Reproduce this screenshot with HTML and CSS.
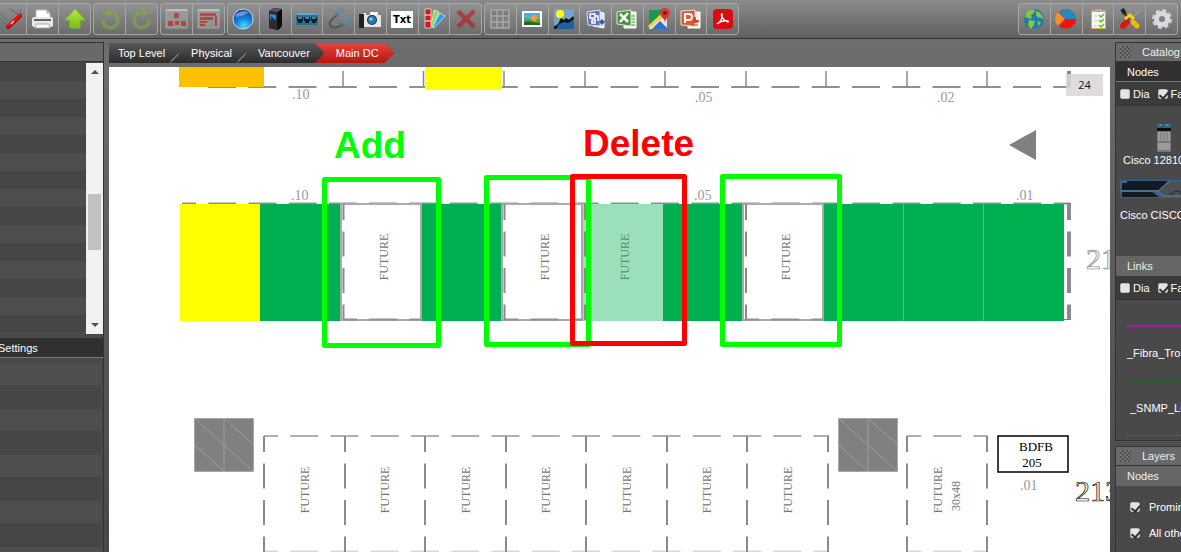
FILE: index.html
```html
<!DOCTYPE html>
<html lang="en">
<head>
    <meta charset="utf-8">
    <title>Main DC</title>
    <link rel="stylesheet" href="styles.css">
</head>
<body>
    <header class="toolbar">
        <div class="group group-3">
            <button type="button" aria-label="Tools"><svg viewBox="0 0 24 24"><path d="M1 6l8 7M1 11l8 9" stroke="#5b7382" stroke-width="1.5" stroke-dasharray="2 1"/><path d="M11 2l8 5M21 2l1 6-4-1" fill="none" stroke="#50687a" stroke-width="1.5" stroke-dasharray="2 1"/><path d="M9 20L21 9" stroke="#a00" stroke-width="4" stroke-linecap="round"/><path d="M9 19L21 8" stroke="#f01010" stroke-width="3" stroke-linecap="round"/><path d="M12 17l3-3" stroke="#fff" stroke-width="1.2"/></svg></button>
            <button type="button" aria-label="Print"><svg viewBox="0 0 24 24"><path d="M5 11V3h11l3 3v5z" fill="#fff" stroke="#bbb"/><path d="M16 3v3h3" fill="none" stroke="#999"/><rect x="1" y="10" width="21" height="10" rx="2" fill="#e8e8e8"/><path d="M3 12h17v2H3z" fill="#666"/><path d="M5 17h13l1 4H4z" fill="#fff" stroke="#aaa"/></svg></button>
            <button type="button" aria-label="Up one level"><svg viewBox="0 0 24 24"><path d="M12 2L22 13h-5v8H7v-8H2z" fill="url(#lime)" stroke="#7fc41c" stroke-linejoin="round"/></svg></button>
        </div>
        <div class="group group-2">
            <button type="button" aria-label="Undo"><svg viewBox="0 0 24 24" class="faded"><path d="M5 12A7.500 7.500 0 1 0 11 6" fill="none" stroke="#7ab03a" stroke-width="3.500"/><path d="M4 6l8-5v9z" fill="#7ab03a"/></svg></button>
            <button type="button" aria-label="Redo"><svg viewBox="0 0 24 24" class="faded"><path d="M13 6A7.500 7.500 0 1 0 19 12" fill="none" stroke="#7ab03a" stroke-width="3.500"/><path d="M12 1l8 5-8 4z" fill="#7ab03a"/></svg></button>
        </div>
        <div class="group group-2">
            <button type="button" aria-label="Diagram view"><svg viewBox="0 0 24 24" class="faded"><rect x="1" y="3" width="21" height="18" fill="#a5a5a5" stroke="#c0c0c0"/><path d="M1 3h21" stroke="#ddd" stroke-width="2"/><path d="M9 6h5v5H9zM3 14h5v5H3zM10 14h4v4h-4zM16 14h5v5h-5z" fill="#d8241c"/></svg></button>
            <button type="button" aria-label="Chart view"><svg viewBox="0 0 24 24" class="faded"><rect x="1" y="3" width="21" height="18" fill="#a5a5a5" stroke="#c0c0c0"/><path d="M1 3h21" stroke="#ddd" stroke-width="2"/><path d="M3 6h16v3H3zM3 10h13v3H3zM3 14h7v2H3zM3 17h5v2H3zM18 9h2v10h-2z" fill="#d8241c"/></svg></button>
        </div>
        <div class="group group-8">
            <button type="button" aria-label="Location"><svg viewBox="0 0 24 24"><circle cx="12" cy="12" r="10" fill="url(#sea)" stroke="#c9d8ef"/><path d="M4 9a9 8 0 0 1 14-3c-4 0-5 3-8 3s-4 2-6 0z" fill="#fff" opacity=".35"/></svg></button>
            <button type="button" aria-label="Cabinet"><svg viewBox="0 0 24 24"><path d="M6 4l5-3 8 1v17l-4 4-9-2z" fill="#151515"/><path d="M6 4l8 1v18l-8-2z" fill="#2c2c2c"/><path d="M7 7l6 1v6l-6-2z" fill="#3f87cf"/><path d="M8 9l5 4v2l-5-2z" fill="#153e70"/><path d="M15 6l4-4v17l-4 4z" fill="#0c0c0c"/><path d="M6 4l5-3 8 1-5 3z" fill="#555"/></svg></button>
            <button type="button" aria-label="Switch"><svg viewBox="0 0 24 24"><path d="M2 6h20l1 3v9H1V9z" fill="#20719b"/><path d="M2 6h20l1 2H1z" fill="#5aa8cc"/><path d="M2 10h6v4H7v2H3v-2H2zM9 10h6v4h-1v2h-4v-2H9zM16 10h6v4h-1v2h-4v-2h-1z" fill="#0a1c26"/><path d="M4 10v2M6 10v2M11 10v2M13 10v2M18 10v2M20 10v2" stroke="#b9d4df"/></svg></button>
            <button type="button" aria-label="Cable"><svg viewBox="0 0 24 24" opacity=".8"><path d="M11 7C7 11 1 14 3 18s9 3 13-1" fill="none" stroke="#4b5054" stroke-width="2"/><path d="M11 6l3-3M17 16l4-4" stroke="#5e8ba8" stroke-width="5" stroke-linecap="round"/><path d="M9 9l2-2M15 19l2-2" stroke="#3d6f8f" stroke-width="3"/></svg></button>
            <button type="button" aria-label="Snapshot"><svg viewBox="0 0 24 24"><path d="M1 8h4V6h3v2h15v12H1z" fill="#e6e6e6"/><path d="M1 7h5v14H1z" fill="#222"/><path d="M12 5h8v3h-8z" fill="#fafafa"/><circle cx="14" cy="13" r="5" fill="#2d2d2d"/><circle cx="14" cy="13" r="4" fill="#1b7fb8"/><circle cx="13" cy="12" r="1.500" fill="#9ddcff"/></svg></button>
            <button type="button" aria-label="Text"><svg viewBox="0 0 24 24"><rect x="1" y="3" width="22" height="18" fill="#fff"/><path d="M1 3h22" stroke="#7890a2" stroke-width="2"/><text x="12" y="16" class="txt">Txt</text></svg></button>
            <button type="button" aria-label="Colours"><svg viewBox="0 0 24 24"><path d="M10 20L18 6l5 3-11 12z" fill="#2b9df0" stroke="#e8f4ff" stroke-width=".7"/><path d="M9 19l3-16 5 2-6 15z" fill="#9ad45a" stroke="#f0ffe0" stroke-width=".7"/><path d="M3 2h6v19H3z" fill="#d41717" stroke="#eee" stroke-width=".7"/><path d="M3 8h6M3 14h6" stroke="#fff"/></svg></button>
            <button type="button" aria-label="Delete"><svg viewBox="0 0 24 24" class="faded"><path d="M4 4l16 16M20 4L4 20" stroke="#c01414" stroke-width="4.500"/></svg></button>
        </div>
        <div class="group group-8">
            <button type="button" aria-label="Grid"><svg viewBox="0 0 24 24"><rect x="3" y="3" width="18" height="18" fill="#7e7e7e"/><path d="M3 3h18v18H3zM3 9h18M3 15h18M9 3v18M15 3v18" fill="none" stroke="#a8a8a8" stroke-width="1.500"/></svg></button>
            <button type="button" aria-label="Image"><svg viewBox="0 0 24 24"><rect x="2" y="4" width="20" height="16" fill="#fff"/><rect x="4" y="6" width="16" height="12" fill="#58a8df"/><path d="M4 12c4-2 7 2 16 0v6H4z" fill="#4eaa32"/><path d="M4 15c6-2 8 1 16 1v2H4z" fill="#246b1d"/><circle cx="14" cy="11" r="3" fill="#ff9a2e"/></svg></button>
            <button type="button" aria-label="Background"><svg viewBox="0 0 24 24"><path d="M2 2h20v20H2z" fill="#77a5c8"/><path d="M2 22V19L22 10v12z" fill="#235f9f"/><path d="M2 20l4-3 3-6 3 2 2-2 3 2 4-4 1 3-6 4-4-1-5 2-3 5H2z" fill="#111"/><circle cx="8" cy="7" r="4" fill="#ff0"/></svg></button>
            <button type="button" aria-label="Visio"><svg viewBox="0 0 24 24"><path d="M9 4l11 2v15L9 19z" fill="#dfe6fa" stroke="#fff"/><path d="M3 5l13-2v16l-12-1z" fill="#5c74b8" stroke="#d7dff5"/><path d="M6 7h5v4H6zM8 13h3v3H8zM11 9h3v5" fill="none" stroke="#fff" stroke-width="1.500"/><path d="M18 12l3 3-3 3-3-3z" fill="#3c57a8"/></svg></button>
            <button type="button" aria-label="Excel"><svg viewBox="0 0 24 24"><path d="M9 5h12v16H9z" fill="#eef6e8" stroke="#fff"/><path d="M16 9h4M16 12h4M16 15h4M11 18h9" stroke="#4d8d3e"/><path d="M2 5l14-2v16L2 17z" fill="#4a9140" stroke="#d8edcf"/><path d="M5 7l8 8M13 6l-8 9" stroke="#fff" stroke-width="2.500"/></svg></button>
            <button type="button" aria-label="Map"><svg viewBox="0 0 24 24"><path d="M2 3h18v19H2z" fill="#159c54"/><path d="M2 21L20 6v16H2z" fill="#e5e5e5"/><path d="M5 22l8-8 8 8z" fill="#2e6fd8"/><path d="M2 20L17 6" stroke="#ffd22e" stroke-width="3"/><path d="M18 16c0-5-5-6-5-10a5 5 0 0 1 10 0c0 4-5 5-5 10z" fill="#d53a2c"/><circle cx="18" cy="6" r="2" fill="#7b1510"/></svg></button>
            <button type="button" aria-label="PowerPoint"><svg viewBox="0 0 24 24"><path d="M9 5h12v16H9z" fill="#fff0ea" stroke="#fff"/><path d="M2 4l14-1v16L2 18z" fill="#dd5a34" stroke="#ffd5c7"/><path d="M6 16V7h4a3 3 0 0 1 0 6H6" fill="none" stroke="#fff" stroke-width="2"/><path d="M17 10a3 3 0 1 0 3 3h-3z" fill="#d3441f"/><path d="M11 18h8" stroke="#d3441f"/></svg></button>
            <button type="button" aria-label="PDF"><svg viewBox="0 0 24 24"><rect x="2" y="2" width="20" height="20" rx="4" fill="#d90c10"/><path d="M6 17c3-1 6-6 5-10-2 0 1 7 6 8 2-2-7-2-11 2z" fill="none" stroke="#fff" stroke-width="1.300"/></svg></button>
        </div>
        <div class="group group-5">
            <button type="button" aria-label="World"><svg viewBox="0 0 24 24"><circle cx="12" cy="12" r="10" fill="#1c7bb0"/><path d="M4 6c3-4 7-4 9-3l-1 3-3 2 1 3-3 1-2-2-2 1zM14 4c5 1 7 5 7 9l-3-3-2 1-2-3zM7 13l6 1-1 4-3 4-3-4zM15 14l4 1-2 4z" fill="#87c840"/></svg></button>
            <button type="button" aria-label="Reports"><svg viewBox="0 0 24 24"><circle cx="12" cy="12" r="10" fill="#e9180d"/><path d="M11 12L4 5a10 10 0 0 0 0 14z" fill="#f7902a"/><path d="M11 12L5 5a10 10 0 0 1 17 7z" fill="#2389be"/></svg></button>
            <button type="button" aria-label="Tasks"><svg viewBox="0 0 24 24"><rect x="5" y="3" width="15" height="19" rx="1" fill="#d9a94a"/><path d="M6 5h13v16H6z" fill="#f6f8f4"/><path d="M9 2h7v3H9z" fill="#aaa"/><path d="M13 8l2 2 3-3M13 13l2 2 3-3M13 18l2 2 3-3" fill="none" stroke="#68b52b" stroke-width="1.500"/><path d="M8 9h3M8 14h3M8 19h3" stroke="#c5cec2"/></svg></button>
            <button type="button" aria-label="Maintenance"><svg viewBox="0 0 24 24"><path d="M21 4l-8 8" stroke="#8398a6" stroke-width="2"/><path d="M20 5l2-2" stroke="#8398a6" stroke-width="4"/><path d="M9 15l-4 4" stroke="#e51313" stroke-width="6" stroke-linecap="round"/><path d="M4 2l3 5" stroke="#222" stroke-width="4"/><path d="M7 7l4 5" stroke="#222" stroke-width="2"/><path d="M15 15l4 4" stroke="#f6b60c" stroke-width="5" stroke-linecap="round"/><path d="M7 12l5-4 4 4" stroke="#f6d20c" stroke-width="3" fill="none"/></svg></button>
            <button type="button" aria-label="Preferences"><svg viewBox="0 0 24 24"><circle cx="12" cy="12" r="8" fill="none" stroke="#ccd3d9" stroke-width="4" stroke-dasharray="3.700 2.583"/><circle cx="12" cy="12" r="5.500" fill="none" stroke="#d5dbe0" stroke-width="5"/></svg></button>
        </div>
    </header>

    <main class="workspace">
        <aside class="side-left">
            <div class="panel-title"></div>
            <div class="tree">
                <div class="tree-rows"></div>
                <div class="scrollbar">
                    <span class="arrow arrow-up"></span>
                    <span class="thumb"></span>
                    <span class="arrow arrow-down"></span>
                </div>
            </div>
            <h2 class="settings-title">Settings</h2>
            <div class="settings-rows"></div>
        </aside>

        <section class="center">
            <nav class="crumbs">
                <a href="#">Top Level</a>
                <a href="#">Physical</a>
                <a href="#">Vancouver</a>
                <a href="#" class="current">Main DC</a>
            </nav>
            <div class="plan">
                <svg viewBox="109 67 1001 485" preserveAspectRatio="xMinYMin slice">
                    <defs>
                        <linearGradient id="lime" x2="0" y2="1"><stop stop-color="#b4ea3e"/><stop offset="1" stop-color="#79bd13"/></linearGradient>
                        <radialGradient id="sea" cx=".55" cy=".85" r=".8"><stop stop-color="#3fe0ff"/><stop offset=".5" stop-color="#1680dc"/><stop offset="1" stop-color="#154a9c"/></radialGradient>
                        <g id="column">
                            <path d="M0 0h59v53H0z" fill="#808080" stroke="#a8a8a8"/>
                            <path d="M29.500 0v53M0 0l59 53M29.500 0L59 26M0 26l29.500 27" fill="none" stroke="#a8a8a8" stroke-width=".7"/>
                        </g>
                    </defs>

                    <!-- upper row -->
                    <path class="dash-h" d="M208 87H1070"/>
                    <path class="wall" d="M343 71v16M423.500 71v16M504 71v16M585 71v16M665 71v16M746 71v16M826 71v16M907 71v16M987 71v16"/>
                    <path class="wall thick" d="M1069 71v16"/>
                    <path d="M179 67h85v20h-85z" fill="#ffc000"/>
                    <path d="M425 67h77v23h-77z" fill="#ff0"/>
                    <g class="mark">
                        <text x="292" y="99">.10</text>
                        <text x="695" y="102">.05</text>
                        <text x="937" y="102">.02</text>
                        <text x="291" y="200">.10</text>
                        <text x="694" y="200">.05</text>
                        <text x="1016" y="200">.01</text>
                        <text x="1020" y="490">.01</text>
                    </g>
                    <path d="M1009 145l27-15v30z" fill="#808080"/>

                    <!-- middle row -->
                    <path class="dash-h from-corner" d="M182 203.500H1070"/>
                    <path d="M180 204h80v117h-80z" fill="#ff0"/>
                    <path d="M260 204h80v117h-80zM421 204h80v117h-80zM663 204h79v117h-79zM823 204h241v117H823z" fill="#00b050"/>
                    <path d="M582 204h81v117h-81z" fill="#9be0bb"/>
                    <path d="M903.500 204v117M983.500 204v117" stroke="#45c67f"/>
                    <path d="M341 204h80v116h-80zM502 204h80v116h-80zM743 204h80v116h-80z" fill="#fff" stroke="#aaa" stroke-width="2"/>
                    <path class="dash-h from-corner" d="M343 319.500H421M504 319.500H582M745 319.500H823"/>
                    <path class="dash-v" d="M343.500 204v116M504.500 204v116M585 204v116M746 204v116"/>
                    <path class="dash-v thick" d="M1069 204v116"/>
                    <path d="M1064 203.500h7M1064 319.500h7" stroke="#808080"/>
                    <g class="future">
                        <text transform="translate(388 257) rotate(-90)">FUTURE</text>
                        <text transform="translate(549 257) rotate(-90)">FUTURE</text>
                        <text transform="translate(629 257) rotate(-90)" fill="#5d8f74">FUTURE</text>
                        <text transform="translate(790 257) rotate(-90)">FUTURE</text>
                    </g>
                    <text class="aisle" x="1086" y="269">21</text>

                    <!-- lower row -->
                    <use href="#column" x="194.500" y="418.500"/>
                    <use href="#column" x="838.500" y="418.500"/>
                    <path class="dash-h from-corner light" d="M264 436H829M907 436H988"/>
                    <path class="dash-h from-corner faint" d="M264 551.500H829M907 551.500H988"/>
                    <path class="dash-v" d="M264 436v116M345 436v116M425 436v116M506 436v116M586 436v116M667 436v116M747 436v116M828 436v116M907 436v116M987 436v116"/>
                    <g class="future">
                        <text transform="translate(309 490) rotate(-90)">FUTURE</text>
                        <text transform="translate(389 490) rotate(-90)">FUTURE</text>
                        <text transform="translate(470 490) rotate(-90)">FUTURE</text>
                        <text transform="translate(550 490) rotate(-90)">FUTURE</text>
                        <text transform="translate(631 490) rotate(-90)">FUTURE</text>
                        <text transform="translate(711 490) rotate(-90)">FUTURE</text>
                        <text transform="translate(792 490) rotate(-90)">FUTURE</text>
                        <text transform="translate(942 490) rotate(-90)">FUTURE</text>
                        <text transform="translate(960 496) rotate(-90)">30x48</text>
                    </g>
                    <path d="M998 436h70v36h-70z" fill="#fff" stroke="#000" stroke-width="1.500"/>
                    <text class="bay" x="1036" y="451">BDFB</text>
                    <text class="bay" x="1032" y="467">205</text>
                    <text class="aisle dark" x="1075" y="501">213</text>

                    <!-- change markers -->
                    <g class="marker add">
                        <path d="M324.500 179.500h114v166h-114z"/>
                        <path d="M486.500 177.500h102v167h-102z"/>
                        <path d="M722.500 176.500h117v168h-117z"/>
                    </g>
                    <path class="marker delete" d="M572.500 176.500h112v167h-112z"/>
                    <text class="caption" x="334" y="158" fill="#0f0">Add</text>
                    <text class="caption" x="583" y="156" fill="#f00">Delete</text>
                </svg>
                <span class="zoom-level">24</span>
            </div>
        </section>

        <aside class="side-right">
            <section class="panel">
                <h2 class="panel-title"><span class="grip"></span>Catalog</h2>
                <h3 class="section-title active">Nodes</h3>
                <div class="filter">
                    <label><input type="checkbox">Dia</label>
                    <label><input type="checkbox" checked>Fa</label>
                </div>
                <div class="devices">
                    <div class="device">
                        <svg class="router" viewBox="0 0 14 28"><path d="M0 0h14v28H0z" fill="#777"/><path d="M0 0h14v4H0z" fill="#27617f"/><path d="M0 4h14v3H0z" fill="#0d0d0d"/><path d="M1 8h12v9H1zM1 19h12v7H1z" fill="#9c9c9c"/><path d="M4 8v9M7 8v9M10 8v9" stroke="#777"/><path d="M2 1h3M8 1h4" stroke="#75aec7"/></svg>
                        <span>Cisco 12810</span>
                    </div>
                    <div class="device">
                        <svg class="chassis" viewBox="0 0 64 18"><path d="M0 0h64v18H0z" fill="#355f85"/><path d="M2 1h46l-9 9H2zM2 12h30l7 5H2z" fill="#101a22"/><path d="M38 11l14-10h12v15H44z" fill="#4c5053"/><path d="M0 11h38l12-10M38 11l6 5h20" fill="none" stroke="#6d7f8c"/><path d="M49 14h4l2-3h4l2 3" fill="none" stroke="#222"/><path d="M2 2h5" stroke="#9ab"/></svg>
                        <span>Cisco CISCO</span>
                    </div>
                </div>
                <h3 class="section-title">Links</h3>
                <div class="filter">
                    <label><input type="checkbox">Dia</label>
                    <label><input type="checkbox" checked>Fa</label>
                </div>
                <div class="links">
                    <div class="link fibra"><span>_Fibra_Tro</span></div>
                    <div class="link snmp"><span>_SNMP_Li</span></div>
                    <div class="link dotted"></div>
                </div>
            </section>
            <section class="panel layers">
                <h2 class="panel-title"><span class="grip"></span>Layers</h2>
                <h3 class="section-title">Nodes</h3>
                <div class="layer-list">
                    <label><input type="checkbox" checked>Promin</label>
                    <label><input type="checkbox" checked>All othe</label>
                </div>
            </section>
        </aside>
    </main>
</body>
</html>
```
FILE: styles.css
```css
* { box-sizing: border-box; }
body { margin: 0; height: 100vh; display: flex; flex-direction: column; overflow: hidden; font: 11px/14px "Liberation Sans", Arial, sans-serif; color: #fff; background: #6b6b6b; }
h2, h3 { margin: 0; font-size: 11px; font-weight: normal; white-space: nowrap; }

/* toolbar */
.toolbar { display: flex; flex: none; gap: 2px; padding: 3px 3px 3px 0; height: 39px; background: linear-gradient(#8b8b8b, #606060); border-bottom: 1px solid #333; }
.group { display: flex; flex: none; height: 32px; border: 1px solid #a6a6a6; border-radius: 3px; background: linear-gradient(#929292, #6c6c6c); }
.group-2 { width: 65px; }
.group-3 { width: 97px; margin-left: -6px; }
.group-5 { width: 160px; margin-left: auto; }
.group-8 { width: 255px; }
.group button { flex: 1; display: flex; align-items: center; justify-content: center; min-width: 0; padding: 0; border: 0; background: none; }
.group button + button { border-left: 1px solid #a6a6a6; }
.group svg { width: 24px; height: 24px; flex: none; }
.faded { opacity: 0.6; }
.txt { font: bold 10px "DejaVu Sans", sans-serif; text-anchor: middle; }

.workspace { display: flex; flex: 1; min-height: 0; padding-top: 3px; background: linear-gradient(#6e6e6e, #5a5a5a 50%, #484848); }
.panel-title { display: flex; align-items: center; height: 20px; border: 1px solid #333; background: #696969; color: #eee; }

/* left panel */
.side-left { flex: 0 0 104px; display: flex; flex-direction: column; border-right: 1px solid #333; background: #494949; }
.side-left .panel-title { flex: none; border-left: 0; border-right: 0; }
.tree { display: flex; flex: none; height: 276px; padding: 1px 0 4px; }
.tree-rows { flex: 1; background: repeating-linear-gradient(#464646 0 18px, #4e4e4e 18px 36px); }
.scrollbar { display: flex; flex-direction: column; align-items: center; width: 17px; padding: 7px 0; background: #f1f1f1; }
.arrow { border: 4px solid transparent; border-top: 0; border-bottom-color: #505050; }
.arrow-down { border: 4px solid transparent; border-bottom: 0; border-top-color: #505050; margin-top: auto; }
.thumb { width: 13px; height: 56px; margin-top: 120px; background: #c1c1c1; }
.settings-title { flex: none; height: 20px; padding-top: 3px; margin-left: -2px; background: #303030; border-bottom: 1px solid #777; }
.settings-rows { flex: 1; margin: 5px 2px 0 0; background: repeating-linear-gradient(#4e4e4e 0 22px, #464646 22px 46px); }

/* centre */
.center { flex: 1; min-width: 0; display: flex; flex-direction: column; margin: 1px 5px 0; }
.crumbs { display: flex; flex: none; height: 20px; margin-bottom: 4px; }
.crumbs a { display: flex; align-items: center; gap: 5px; padding-left: 12px; color: #fff; text-decoration: none; background: linear-gradient(#575757, #2c2c2c); }
.crumbs a:first-child { padding-left: 9px; }
.crumbs a::after { content: ""; align-self: flex-end; width: 9px; height: 10px; background: linear-gradient(to bottom right, transparent 45%, #777 46% 54%, transparent 55%); }
.crumbs a:nth-child(3)::after { background: none; }
.crumbs .current { margin-left: -9px; padding: 0 16px 0 21px; background: linear-gradient(#e5443b, #b8170e); clip-path: polygon(0 0, calc(100% - 10px) 0, 100% 50%, calc(100% - 10px) 100%, 0 100%, 10px 50%); }
.crumbs .current::after { display: none; }
.plan { position: relative; flex: 1; min-height: 0; overflow: hidden; background: #fff; }
.plan svg { display: block; width: 100%; height: 100%; }
.dash-h { fill: none; stroke: #909090; stroke-width: 2; stroke-dasharray: 28 12.25; }
.from-corner { stroke-dashoffset: 14; }
.dash-v { fill: none; stroke: #8a8a8a; stroke-width: 2; stroke-dasharray: 25 11.5; stroke-dashoffset: 9; }
.light { stroke: #b0b0b0; }
.faint { stroke: #d8d8d8; }
.wall { stroke: #8a8a8a; stroke-width: 1.5; }
.thick { stroke-width: 4; }
.mark { font: 14px "Liberation Serif", serif; fill: #999; }
.future { font: 12px "Liberation Serif", serif; fill: #777; text-anchor: middle; }
.bay { font: 13px "Liberation Serif", serif; fill: #000; text-anchor: middle; }
.aisle { font: 30px "Liberation Serif", serif; fill: #eee; stroke: #888; stroke-width: 0.7; }
.dark { stroke: #111; }
.marker { fill: none; stroke-width: 5; stroke-linejoin: round; }
.add { stroke: #0f0; }
.delete { stroke: #f00; }
.caption { font: bold 37px "Liberation Sans", Arial, sans-serif; }
.zoom-level { position: absolute; top: 7px; right: 7px; width: 37px; height: 22px; background: rgba(215, 215, 215, 0.85); color: #111; font: 11px/22px "Open Sans", sans-serif; text-align: center; }

/* right panel */
.side-right { flex: 0 0 66px; display: flex; flex-direction: column; gap: 5px; overflow: hidden; }
.panel { flex: none; border-left: 1px solid #333; border-bottom: 1px solid #333; background: #494949; }
.layers { flex: 1; }
.side-right .panel-title { border-right: 0; border-left: 0; }
.grip { width: 11px; height: 12px; margin: 0 11px 0 4px; background: repeating-conic-gradient(#505050 0 25%, #757575 0 50%) 0 0 / 4px 4px; }
.section-title { height: 20px; padding: 3px 11px; background: #666; color: #eee; }
.section-title.active { background: #303030; color: #fff; border-bottom: 1px solid #777; }
.filter { display: flex; gap: 8px; height: 24px; padding-left: 4px; align-items: center; background: #3b3b3b; border-bottom: 1px solid #333; white-space: nowrap; }
label { display: flex; align-items: center; gap: 4px; white-space: nowrap; }
input[type="checkbox"] { appearance: none; width: 10px; height: 10px; margin: 0; border: 1px solid #bbb; border-radius: 2px; background: #e4e4e4; }
input[type="checkbox"]:checked::before { content: ""; display: block; width: 4px; height: 7px; margin-left: 2px; border: solid #333; border-width: 0 2px 2px 0; transform: rotate(40deg); }
.filter label { gap: 3px; }
.devices { height: 150px; padding-top: 18px; white-space: nowrap; }
.device { display: flex; flex-direction: column; gap: 1px; padding-left: 4px; }
.device .router { width: 14px; height: 28px; margin-left: 37px; }
.device .router + span { padding-left: 3px; }
.device + .device { margin-top: 13px; gap: 10px; }
.chassis { width: 64px; height: 18px; }
.links { height: 140px; padding: 25px 0 0 11px; white-space: nowrap; }
.link { height: 55px; padding-top: 19px; border-top: 2px solid #a020a0; }
.snmp { border-color: #206020; }
.snmp span { padding-left: 3px; }
.dotted { height: 0; padding: 0; border-top: 1px dotted #62627e; }
.layer-list { display: flex; flex-direction: column; gap: 12px; padding: 14px 0 0 14px; }
.layer-list label { gap: 9px; }
.layer-list::after { content: ""; border-top: 1px solid #777; }
```
